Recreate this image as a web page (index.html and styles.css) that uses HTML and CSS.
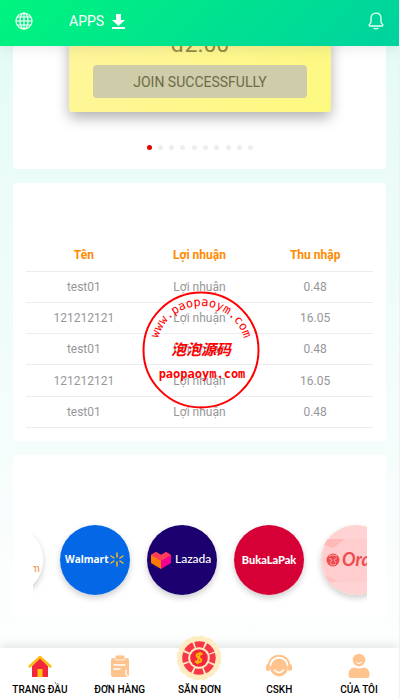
FILE: index.html
```html
<!DOCTYPE html>
<html lang="vi">
<head>
    <meta charset="UTF-8">
    <meta name="viewport" content="width=device-width, initial-scale=1.0">
    <title>Trang đầu</title>
    <link rel="stylesheet" href="styles.css">
</head>
<body>
    <header class="topbar">
        <button class="icon-btn" type="button" aria-label="Ngôn ngữ">
            <svg width="18" height="18" viewBox="0 0 18 18" fill="none" stroke="#fff" stroke-width="1.2">
                <circle cx="9" cy="9" r="8"/>
                <ellipse cx="9" cy="9" rx="4" ry="8"/>
                <path d="M9 1v16M1 9h16M2 5h14M2 13h14"/>
            </svg>
        </button>
        <a class="apps" href="#">APPS
            <svg width="13" height="15" viewBox="0 0 13 15" fill="#fff">
                <path d="M4 0h5v6h4l-6.500 6L0 6h4z"/>
                <path d="M0 13h13v2H0z"/>
            </svg>
        </a>
        <button class="icon-btn bell" type="button" aria-label="Thông báo">
            <svg width="16" height="18" viewBox="0 0 16 18" fill="none" stroke="#e9fff5" stroke-width="1.300" stroke-linecap="round" stroke-linejoin="round">
                <path d="M8 1.200C4.600 1.200 3 3.500 3 6.500V10C3 11.500 1 12.300 1 13.300Q1 14 2 14H14Q15 14 15 13.300C15 12.300 13 11.500 13 10V6.500C13 3.500 11.400 1.200 8 1.200Z"/>
                <path d="M6 16.300Q8 17.500 10 16.300"/>
            </svg>
        </button>
    </header>

    <main>
        <section class="card vip">
            <div class="vip-card">
                <div class="price">đ2.00</div>
                <button class="join" type="button">JOIN SUCCESSFULLY</button>
            </div>
            <div class="dots">
                <i class="on"></i><i></i><i></i><i></i><i></i><i></i><i></i><i></i><i></i><i></i>
            </div>
        </section>

        <section class="card income">
            <table>
                <thead>
                    <tr><th>Tên</th><th>Lợi nhuận</th><th>Thu nhập</th></tr>
                </thead>
                <tbody>
                    <tr><td>test01</td><td>Lợi nhuận</td><td>0.48</td></tr>
                    <tr><td>121212121</td><td>Lợi nhuận</td><td>16.05</td></tr>
                    <tr><td>test01</td><td>Lợi nhuận</td><td>0.48</td></tr>
                    <tr><td>121212121</td><td>Lợi nhuận</td><td>16.05</td></tr>
                    <tr><td>test01</td><td>Lợi nhuận</td><td>0.48</td></tr>
                </tbody>
            </table>
            <svg class="stamp" width="118" height="118" viewBox="0 0 118 118" fill="#f00">
                <circle cx="59" cy="59" r="57.500" fill="none" stroke="#f00" stroke-width="2"/>
                <path id="arc" d="M14 60A45 45 0 0 1 104 60" fill="none"/>
                <text class="stamp-arc"><textPath href="#arc" startOffset="50%" text-anchor="middle">www.paopaoym.com</textPath></text>
                <text class="stamp-cn" x="59" y="64" text-anchor="middle">泡泡源码</text>
                <text class="stamp-url" x="60" y="87" text-anchor="middle">paopaoym.com</text>
            </svg>
        </section>

        <section class="card partners">
            <div class="slider">
                <svg class="logo" viewBox="0 0 70 70">
                    <circle cx="35" cy="35" r="35" fill="#fff"/>
                    <text class="t-m" x="58" y="47" fill="#f58220">m</text>
                </svg>
                <svg class="logo" viewBox="0 0 70 70">
                    <circle cx="35" cy="35" r="35" fill="#0468e6"/>
                    <text class="t-walmart" x="5" y="38" fill="#fff">Walmart</text>
                    <path d="M57 28v4M57 37v4M51 31l3 2M63 31l-3 2M51 38l3-2M63 38l-3-2" stroke="#fdb71a" stroke-width="1.500" stroke-linecap="round"/>
                </svg>
                <svg class="logo" viewBox="0 0 70 70">
                    <circle cx="35" cy="35" r="35" fill="#1c006f"/>
                    <path d="M4 30l5-3 5 3v14L4 38z" fill="#ff7a00"/>
                    <path d="M24 30l-5-3-5 3v14l10-6z" fill="#f5008f"/>
                    <path d="M4 30l10 6 10-6-5-3-5 3-5-3z" fill="#ff3d57"/>
                    <text class="t-lazada" x="28" y="38" fill="#fff">Lazada</text>
                </svg>
                <svg class="logo" viewBox="0 0 70 70">
                    <circle cx="35" cy="35" r="35" fill="#d60037"/>
                    <text class="t-buka" x="35" y="39" text-anchor="middle" fill="#fff">BukaLaPak</text>
                </svg>
                <svg class="logo" viewBox="0 0 70 70">
                    <circle cx="35" cy="35" r="35" fill="#ffd3d3"/>
                    <path d="M6 14h58l6 21-8 22H8L1 35z" fill="#ffcdcd"/>
                    <path d="M7 14h17L12 23 3 20z" fill="#ffb9b9"/>
                    <path d="M4 51l13 5-8 2z" fill="#ffc0c0"/>
                    <circle cx="12" cy="35" r="6.500" fill="#ee4b4e"/>
                    <path d="M8 33l3 2-2 3M16 33l-3 2 2 3M8 31q4-2 8 0M9 39q3 2 6 0" fill="none" stroke="#ffc6c6" stroke-width=".7"/>
                    <text class="t-ora" x="21" y="41" fill="#ee4b4e">Ora</text>
                </svg>
            </div>
        </section>
    </main>

    <nav class="tabbar">
        <a href="#">
            <svg width="24" height="24" viewBox="0 0 24 24">
                <path d="M4 12l8-8 8 8v11H4z" fill="#f2273e"/>
                <path d="M9.500 15h5v8h-5z" fill="#ffc20e"/>
                <path d="M1.500 12.500L12 3l10.500 9.500" fill="none" stroke="#ffbd12" stroke-width="2.400" stroke-linecap="round" stroke-linejoin="round"/>
            </svg>
            TRANG ĐẦU
        </a>
        <a href="#">
            <svg width="24" height="24" viewBox="0 0 24 24">
                <rect x="3" y="4" width="18" height="19" rx="2" fill="#ffc48d"/>
                <rect x="7" y="1" width="10" height="5" rx="2" fill="#ffc48d" stroke="#fff" stroke-width=".8"/>
                <path d="M6 11h11M6 15h6" stroke="#fff" stroke-width="1.500" stroke-linecap="round"/>
                <path d="M18 15.500v4.500q.500 2 3 2.500" fill="none" stroke="#fff" stroke-width="1.200"/>
            </svg>
            ĐƠN HÀNG
        </a>
        <a class="main-tab" href="#">
            <svg width="46" height="46" viewBox="0 0 46 46">
                <circle cx="23" cy="23" r="21" fill="#ffebc0"/>
                <circle cx="23" cy="23" r="21" fill="none" stroke="#ffebc0" stroke-width="2.500" stroke-dasharray="5 3.250" stroke-linecap="round"/>
                <circle cx="23" cy="23" r="13.800" fill="none" stroke="#f83849" stroke-width="6" stroke-dasharray="9.040 1.800" transform="rotate(-18 23 23)"/>
                <circle cx="23" cy="23" r="8.800" fill="#f2273e"/>
                <path d="M26.500 19.500Q24.500 17.800 22 18.700Q19.500 20 21.500 22.300L24.500 23.700Q26.500 26 23.500 27.200Q21 27.800 19 26M24.500 17l-3.500 12" fill="none" stroke="#ffb700" stroke-width="2"/>
            </svg>
            SĂN ĐƠN
        </a>
        <a href="#">
            <svg width="28" height="24" viewBox="0 0 28 24">
                <circle cx="14" cy="13.500" r="9" fill="#ffc48d"/>
                <path d="M3.500 13C3.500-2 24.500-2 24.500 13" fill="none" stroke="#ffc48d" stroke-width="2"/>
                <path d="M5.500 12C7 1 21 1 22.500 12" fill="none" stroke="#fff" stroke-width="1.200"/>
                <rect x="1" y="10" width="4" height="7" rx="2" fill="#ffc48d"/>
                <rect x="23" y="10" width="4" height="7" rx="2" fill="#ffc48d"/>
                <path d="M9.500 16q4.500 5 9 0" fill="none" stroke="#fff" stroke-width="1.500" stroke-linecap="round"/>
            </svg>
            CSKH
        </a>
        <a href="#">
            <svg width="24" height="24" viewBox="0 0 24 24" fill="#ffc48d">
                <circle cx="12" cy="6" r="6.300"/>
                <path d="M1.500 21q0-7.500 6-7.500q4.500 2 9 0q6 0 6 7.500q0 3-2 3h-17q-2 0-2-3z"/>
                <path d="M9.500 8.500q2.500 2.500 5 0" fill="none" stroke="#fff" stroke-linecap="round"/>
            </svg>
            CỦA TÔI
        </a>
    </nav>
</body>
</html>
```
FILE: styles.css
```css
* {
    box-sizing: border-box;
}
body {
    margin: 0;
    min-height: 100vh;
    display: flex;
    flex-direction: column;
    font-family: Roboto, "Noto Sans", sans-serif;
    font-size: 12px;
    background: linear-gradient(to bottom, #e3faf6, #fff);
    border-right: 1px solid #f0f2f2;
}
button {
    font-family: inherit;
    border: none;
    padding: 0;
}
a {
    color: inherit;
    text-decoration: none;
}
svg {
    display: block;
    overflow: visible;
}

.topbar {
    position: sticky;
    top: 0;
    z-index: 10;
    display: flex;
    align-items: center;
    height: 46px;
    padding: 0 15px 4px;
    background: linear-gradient(135deg, #00f47e, #00d29f);
    box-shadow: 0 2px 12px rgba(100, 101, 102, 0.15);
}
.icon-btn {
    background: none;
}
.bell {
    margin-left: auto;
}
.apps {
    display: flex;
    align-items: center;
    gap: 8px;
    margin-left: 36px;
    color: #fff;
    font-size: 14px;
}

main {
    flex: 1;
    display: flex;
    flex-direction: column;
    gap: 14px;
    padding: 0 13px 18px;
}
.card {
    background: #fff;
    border-radius: 4px;
}

/* vip card slides under the top bar */
.vip {
    margin-top: -16px;
    padding: 0 55px 19px 56px;
}
.vip-card {
    padding: 0 24px 14px;
    border-radius: 4px;
    background: linear-gradient(135deg, #fff59d, #fdf97f);
    box-shadow: 0 6px 14px rgba(0, 0, 0, 0.3);
}
.price {
    height: 35px;
    line-height: 29px;
    font-size: 23px;
    text-align: center;
    color: #918b40;
}
.join {
    display: block;
    width: 100%;
    height: 33px;
    border-radius: 4px;
    background: #cfcca9;
    color: #6d6b48;
    font-size: 14px;
}
.dots {
    display: flex;
    justify-content: space-between;
    width: 107px;
    margin: 33px auto 0;
}
.dots i {
    width: 5px;
    height: 5px;
    border-radius: 50%;
    background: #ebedf0;
}
.dots .on {
    background: #e60000;
}

.income {
    position: relative;
    padding: 57px 13px 13px;
}
table {
    width: 100%;
    height: 188px;
    table-layout: fixed;
    border-collapse: collapse;
    text-align: center;
    color: #969799;
}
th, td {
    height: 31px;
    padding: 0;
    border-bottom: 1px solid #ebedf0;
}
th {
    color: #ff8a00;
}
.stamp {
    position: absolute;
    top: 108px;
    left: 50%;
    margin-left: -58px;
}
.stamp-arc {
    font: 12px "DejaVu Sans Mono", monospace;
}
.stamp-url {
    font: bold 12px "DejaVu Sans Mono", monospace;
}
.stamp-cn {
    font: italic bold 15px "Noto Sans CJK SC", sans-serif;
}

.partners {
    padding: 55px 19px 14px 20px;
}
.slider {
    display: flex;
    gap: 17px;
    padding: 15px 0 8px;
    overflow: hidden;
}
.logo {
    flex: none;
    width: 70px;
    height: 70px;
    border-radius: 50%;
    box-shadow: 0 3px 6px rgba(0, 0, 0, 0.2);
}
.logo:first-child {
    margin-left: -60px;
}
.t-m {
    font: 10px Roboto, sans-serif;
}
.t-walmart {
    font: bold 10px "Open Sans", sans-serif;
}
.t-lazada {
    font: 500 12px Lato, sans-serif;
}
.t-buka {
    font: 900 11px Lato, sans-serif;
}
.t-ora {
    font: italic bold 18px Lato, sans-serif;
}

.tabbar {
    position: sticky;
    bottom: 0;
    display: flex;
    height: 50px;
    background: #fff;
    box-shadow: 0 -2px 10px rgba(0, 0, 0, 0.12);
}
.tabbar a {
    flex: 1;
    display: flex;
    flex-direction: column;
    align-items: center;
    justify-content: flex-end;
    gap: 5px;
    padding-bottom: 1px;
    font-size: 10px;
    font-weight: 500;
    line-height: 14px;
    white-space: nowrap;
    color: #000;
}
.tabbar .main-tab {
    gap: 2px;
}
```
